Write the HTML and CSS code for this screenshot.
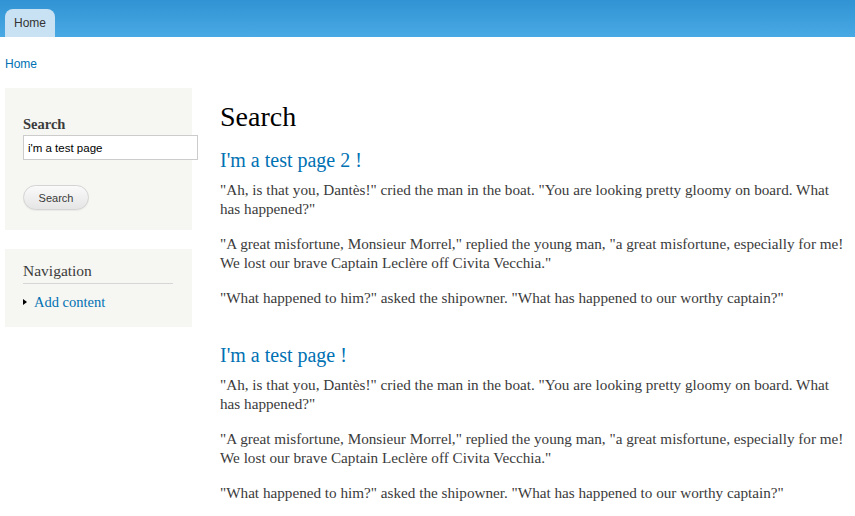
FILE: index.html
```html
<!DOCTYPE html>
<html lang="en">
<head>
<meta charset="utf-8">
<title>Search</title>
<link rel="stylesheet" href="styles.css">
</head>
<body>
<header class="header">
  <nav class="tabs">
    <a class="tab active" href="#">Home</a>
  </nav>
</header>
<div class="breadcrumb"><a href="#">Home</a></div>
<div class="page">
  <aside class="sidebar">
    <section class="block">
      <form class="search-form">
        <label class="search-label" for="q">Search</label>
        <input class="search-input" id="q" type="text" value="i'm a test page">
        <button class="btn" type="button">Search</button>
      </form>
    </section>
    <section class="block nav-block">
      <h2 class="block-title">Navigation</h2>
      <ul class="menu">
        <li class="menu-item"><a href="#">Add content</a></li>
      </ul>
    </section>
  </aside>
  <main class="content">
    <h1 class="page-title">Search</h1>
    <ol class="results">
      <li class="result">
        <h3 class="result-title"><a href="#">I'm a test page 2 !</a></h3>
        <div class="snippet">
          <p>"Ah, is that you, Dantès!" cried the man in the boat. "You are looking pretty gloomy on board. What has happened?"</p>
          <p>"A great misfortune, Monsieur Morrel," replied the young man, "a great misfortune, especially for me! We lost our brave Captain Leclère off Civita Vecchia."</p>
          <p>"What happened to him?" asked the shipowner. "What has happened to our worthy captain?"</p>
        </div>
      </li>
      <li class="result">
        <h3 class="result-title"><a href="#">I'm a test page !</a></h3>
        <div class="snippet">
          <p>"Ah, is that you, Dantès!" cried the man in the boat. "You are looking pretty gloomy on board. What has happened?"</p>
          <p>"A great misfortune, Monsieur Morrel," replied the young man, "a great misfortune, especially for me! We lost our brave Captain Leclère off Civita Vecchia."</p>
          <p>"What happened to him?" asked the shipowner. "What has happened to our worthy captain?"</p>
        </div>
      </li>
    </ol>
  </main>
</div>
</body>
</html>
```

FILE: styles.css
```css
html, body {
  margin: 0;
  padding: 0;
}
body {
  background: #fff;
  color: #3b3b3b;
  font-family: "Liberation Serif", Georgia, serif;
  font-size: 15.2px;
  overflow: hidden;
}
a {
  color: #0071b3;
  text-decoration: none;
}
.header {
  height: 37px;
  background: linear-gradient(to bottom, #3193d3 0%, #48a9e4 100%);
  display: flex;
  align-items: flex-end;
}
.tabs {
  display: flex;
  padding-left: 5px;
}
.tab {
  display: block;
  height: 28px;
  line-height: 28px;
  padding: 0 9px;
  background: #c9e2f3;
  border-radius: 8px 8px 0 0;
  color: #333;
  font-family: "Liberation Sans", Arial, sans-serif;
  font-size: 12px;
}
.breadcrumb {
  padding: 20px 5px 0;
  height: 31px;
  line-height: 15px;
  font-family: "Liberation Sans", Arial, sans-serif;
  font-size: 12px;
}
.page {
  display: flex;
  padding: 0 6px 0 5px;
  gap: 28px;
}
.sidebar {
  width: 187px;
  flex: none;
  display: flex;
  flex-direction: column;
  gap: 19px;
}
.block {
  background: #f6f6f2;
  padding: 0 18px;
}
.search-form {
  display: flex;
  flex-direction: column;
  align-items: flex-start;
  padding: 28px 0 20px;
}
.search-label {
  font-weight: bold;
  font-size: 14.5px;
  line-height: 17px;
  color: #3b3b3b;
  margin-bottom: 2px;
}
.search-input {
  box-sizing: border-box;
  width: 175px;
  height: 25px;
  border: 1px solid #ccc;
  background: #fff;
  padding: 2px 4px;
  font-family: "Liberation Sans", Arial, sans-serif;
  font-size: 11.5px;
  color: #000;
  margin: 0 -6px 25px 0;
}
.btn {
  box-sizing: border-box;
  width: 66px;
  height: 25px;
  border: 1px solid #d4d4d4;
  border-radius: 13px;
  background: linear-gradient(to bottom, #fafafa 0%, #e5e5e5 100%);
  color: #3a3a3a;
  font-family: "Liberation Sans", Arial, sans-serif;
  font-size: 11px;
  padding: 0;
  box-shadow: 0 1px 1px rgba(0,0,0,0.05);
}
.nav-block {
  padding-top: 13px;
  padding-bottom: 16px;
}
.block-title {
  margin: 0;
  font-weight: normal;
  font-size: 15.5px;
  line-height: 18px;
  padding-bottom: 3px;
  border-bottom: 1px solid #d6d6d6;
  margin-right: 1px;
  color: #3b3b3b;
}
.menu {
  list-style: none;
  margin: 9px 0 0;
  padding: 0;
}
.menu-item {
  position: relative;
  padding-left: 11px;
  line-height: 18px;
  font-size: 14.5px;
}
.menu-item::before {
  content: "";
  position: absolute;
  left: 0;
  top: 6px;
  border-left: 4px solid #000;
  border-top: 3px solid transparent;
  border-bottom: 3px solid transparent;
}
.content {
  flex: 1;
  min-width: 0;
}
.page-title {
  margin: 13px 0 0;
  font-weight: normal;
  font-size: 28px;
  line-height: 32px;
  color: #000;
}
.results {
  list-style: none;
  margin: 0;
  padding: 0;
}
.result {
  margin-top: 15px;
}
.result + .result {
  margin-top: 36px;
}
.result-title {
  margin: 0;
  font-weight: normal;
  font-size: 20px;
  line-height: 24px;
}
.snippet p {
  margin: 8px 0 16px;
  line-height: 19px;
}
.snippet p:last-child {
  margin-bottom: 0;
}
```
